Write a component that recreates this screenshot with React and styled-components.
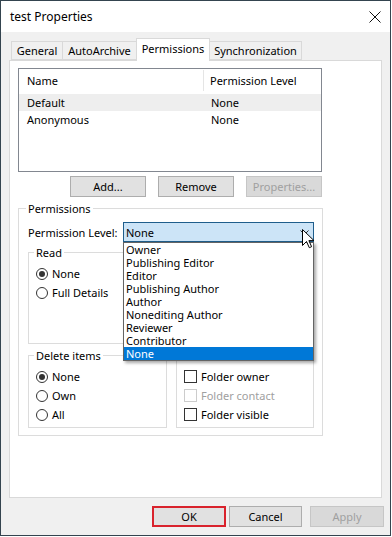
import React from "react";
import styled, { createGlobalStyle } from "styled-components";

const GlobalStyle = createGlobalStyle`
  html, body { margin: 0; padding: 0; background: #ffffff; }
  body { font-family: "Noto Sans", "Open Sans", sans-serif; font-size: 11px; color: #000; }
  * { box-sizing: border-box; }
`;

const Window = styled.div`
  width: 391px;
  height: 536px;
  border: 1px solid #34444f;
  background: #f0f0f0;
  display: flex;
  flex-direction: column;
`;

const TitleBar = styled.div`
  height: 31px;
  background: #fff;
  display: flex;
  align-items: center;
  justify-content: space-between;
  padding: 0 9px 0 9px;
  font-size: 12px;
`;

const Body = styled.div`
  padding: 6px 8px 0 8px;
  display: flex;
  flex-direction: column;
`;

const TabStrip = styled.div`
  display: flex;
  align-items: flex-end;
  height: 22px;
  padding-left: 2px;
  position: relative;
  z-index: 1;
`;

const Tab = styled.div`
  width: ${(p) => p.$w}px;
  height: ${(p) => (p.$active ? 23 : 19)}px;
  margin-bottom: ${(p) => (p.$active ? -1 : 0)}px;
  margin-left: ${(p) => (p.$first ? 0 : -1)}px;
  border: 1px solid #d9d9d9;
  border-bottom: ${(p) => (p.$active ? "none" : "1px solid #d9d9d9")};
  background: ${(p) => (p.$active ? "#fff" : "#f0f0f0")};
  display: flex;
  align-items: ${(p) => (p.$active ? "flex-start" : "center")};
  padding-top: ${(p) => (p.$active ? 3 : 0)}px;
  justify-content: center;
  white-space: nowrap;
  line-height: 14px;
`;

const Panel = styled.div`
  height: 438px;
  background: #fff;
  border: 1px solid #d9d9d9;
  padding: 7px 8px 0 8px;
`;

const ListBox = styled.div`
  width: 304px;
  height: 104px;
  border: 1px solid #828790;
  background: #fff;
`;

const ListHeader = styled.div`
  display: grid;
  grid-template-columns: 185px 1fr;
  height: 25px;
`;

const HeaderCell = styled.div`
  display: flex;
  align-items: center;
  padding-left: ${(p) => (p.$first ? 8 : 6)}px;
  border-right: ${(p) => (p.$first ? "1px solid #e5e5e5" : "none")};
  margin: 1px 0 3px;
`;

const ListRow = styled.div`
  display: grid;
  grid-template-columns: 185px 1fr;
  height: 17px;
  align-items: center;
  background: ${(p) => (p.$selected ? "#eeeeee" : "transparent")};
`;

const Cell = styled.div`
  padding-left: ${(p) => (p.$first ? 8 : 7)}px;
  white-space: nowrap;
`;

const ButtonRow = styled.div`
  width: 304px;
  display: flex;
  justify-content: flex-end;
  gap: 12px;
  margin-top: 4px;
`;

const Button = styled.button`
  width: ${(p) => p.$w || 76}px;
  height: 21px;
  margin: 0;
  padding: 0;
  font-family: inherit;
  font-size: 11px;
  color: ${(p) => (p.disabled ? "#a0a0a0" : "#000")};
  background: ${(p) => (p.disabled ? "#d9d9d9" : "#e1e1e1")};
  border: ${(p) => (p.$focus ? "2px solid #d9232d" : p.disabled ? "1px solid #c6c6c6" : "1px solid #adadad")};
  margin-right: ${(p) => p.$mr || 0}px;
`;

const Group = styled.div`
  position: relative;
  border: 1px solid #dcdcdc;
  width: ${(p) => p.$w}px;
  height: ${(p) => p.$h}px;
  padding: ${(p) => p.$pad};
`;

const Caption = styled.span`
  position: absolute;
  top: -7px;
  left: ${(p) => p.$left}px;
  padding: 0 2px;
  line-height: 13px;
  background: #fff;
  white-space: nowrap;
`;

const LevelRow = styled.div`
  display: flex;
  align-items: center;
  height: 20px;
`;

const LevelLabel = styled.div`
  width: 95px;
`;

const SelectWrap = styled.div`
  position: relative;
  width: 191px;
  height: 20px;
`;

const SelectBox = styled.div`
  height: 20px;
  background: #cce4f7;
  border: 1px solid #1f5e8c;
  display: flex;
  align-items: center;
  justify-content: space-between;
  padding: 0 4px 0 2px;
`;

const DropList = styled.div`
  position: absolute;
  top: 20px;
  left: 0;
  width: 191px;
  background: #fff;
  border: 1px solid #646464;
  box-shadow: 2px 2px 3px rgba(0, 0, 0, 0.35);
  z-index: 5;
`;

const DropItem = styled.div`
  height: 13px;
  line-height: 13px;
  padding-left: 2px;
  white-space: nowrap;
  background: ${(p) => (p.$active ? "#0078d7" : "transparent")};
  color: ${(p) => (p.$active ? "#fff" : "#000")};
`;

const Cursor = styled.svg`
  position: absolute;
  left: 179px;
  top: 7px;
  z-index: 10;
`;

const SubGrid = styled.div`
  display: grid;
  grid-template-columns: 139px 138px;
  column-gap: 9px;
  row-gap: 11px;
  margin-top: 10px;
`;

const OptionList = styled.div`
  display: flex;
  flex-direction: column;
  align-items: flex-start;
`;

const Option = styled.label`
  display: inline-flex;
  align-items: center;
  height: 19px;
  gap: 4px;
  color: ${(p) => (p.$disabled ? "#a0a0a0" : "#000")};
  white-space: nowrap;
`;

const Radio = styled.span`
  width: 12px;
  height: 12px;
  border-radius: 50%;
  border: 1px solid #333;
  background: #fff;
  display: flex;
  align-items: center;
  justify-content: center;
  &::after {
    content: "";
    width: 6px;
    height: 6px;
    border-radius: 50%;
    background: ${(p) => (p.$checked ? "#333" : "transparent")};
  }
`;

const Check = styled.span`
  width: 13px;
  height: 13px;
  border: 1px solid ${(p) => (p.$disabled ? "#cccccc" : "#333")};
  background: #fff;
`;

const Footer = styled.div`
  display: flex;
  justify-content: flex-end;
  padding: 8px 6px 0 0;
`;

const permLevels = [
  "Owner",
  "Publishing Editor",
  "Editor",
  "Publishing Author",
  "Author",
  "Nonediting Author",
  "Reviewer",
  "Contributor",
  "None",
];

export default function App() {
  return (
    <>
      <GlobalStyle />
      <Window>
        <TitleBar>
          <span>test Properties</span>
          <svg width="12" height="12" viewBox="0 0 12 12">
            <path d="M0.5 0.5 L11.5 11.5 M11.5 0.5 L0.5 11.5" stroke="#111" strokeWidth="1" fill="none" />
          </svg>
        </TitleBar>
        <Body>
          <TabStrip>
            <Tab $w={52} $first>General</Tab>
            <Tab $w={75}>AutoArchive</Tab>
            <Tab $w={74} $active>Permissions</Tab>
            <Tab $w={93}>Synchronization</Tab>
          </TabStrip>
          <Panel>
            <ListBox>
              <ListHeader>
                <HeaderCell $first>Name</HeaderCell>
                <HeaderCell>Permission Level</HeaderCell>
              </ListHeader>
              <ListRow $selected>
                <Cell $first>Default</Cell>
                <Cell>None</Cell>
              </ListRow>
              <ListRow>
                <Cell $first>Anonymous</Cell>
                <Cell>None</Cell>
              </ListRow>
            </ListBox>
            <ButtonRow>
              <Button>Add...</Button>
              <Button>Remove</Button>
              <Button disabled>Properties...</Button>
            </ButtonRow>
            <Group $w={305} $h={228} $pad="13px 8px 0 9px" style={{ marginTop: 11 }}>
              <Caption $left={7}>Permissions</Caption>
              <LevelRow>
                <LevelLabel>Permission Level:</LevelLabel>
                <SelectWrap>
                  <SelectBox>
                    <span>None</span>
                    <svg width="9" height="5" viewBox="0 0 9 5">
                      <path d="M0.5 0.5 L4.5 4.5 L8.5 0.5" stroke="#333" strokeWidth="1" fill="none" />
                    </svg>
                  </SelectBox>
                  <DropList>
                    {permLevels.map((l, i) => (
                      <DropItem key={l} $active={i === permLevels.length - 1}>
                        {l}
                      </DropItem>
                    ))}
                  </DropList>
                  <Cursor width="13" height="20" viewBox="0 0 13 20">
                    <path
                      d="M0.5 0.5 L0.5 16.5 L4.5 12.5 L7.3 18.7 L9.6 17.7 L6.9 11.6 L12 11.6 Z"
                      fill="#fff"
                      stroke="#000"
                      strokeWidth="1"
                      strokeLinejoin="round"
                    />
                  </Cursor>
                </SelectWrap>
              </LevelRow>
              <SubGrid>
                <Group $w={139} $h={92} $pad="11px 0 0 7px">
                  <Caption $left={5}>Read</Caption>
                  <OptionList>
                    <Option><Radio $checked />None</Option>
                    <Option><Radio />Full Details</Option>
                  </OptionList>
                </Group>
                <Group $w={138} $h={92} $pad="11px 0 0 7px" />
                <Group $w={139} $h={73} $pad="11px 0 0 7px">
                  <Caption $left={5}>Delete items</Caption>
                  <OptionList>
                    <Option><Radio $checked />None</Option>
                    <Option><Radio />Own</Option>
                    <Option><Radio />All</Option>
                  </OptionList>
                </Group>
                <Group $w={138} $h={73} $pad="11px 0 0 7px">
                  <OptionList>
                    <Option><Check />Folder owner</Option>
                    <Option $disabled><Check $disabled />Folder contact</Option>
                    <Option><Check />Folder visible</Option>
                  </OptionList>
                </Group>
              </SubGrid>
            </Group>
          </Panel>
        </Body>
        <Footer>
          <Button $w={74} $focus $mr={3}>OK</Button>
          <Button $w={73} $mr={8}>Cancel</Button>
          <Button $w={74} disabled>Apply</Button>
        </Footer>
      </Window>
    </>
  );
}
